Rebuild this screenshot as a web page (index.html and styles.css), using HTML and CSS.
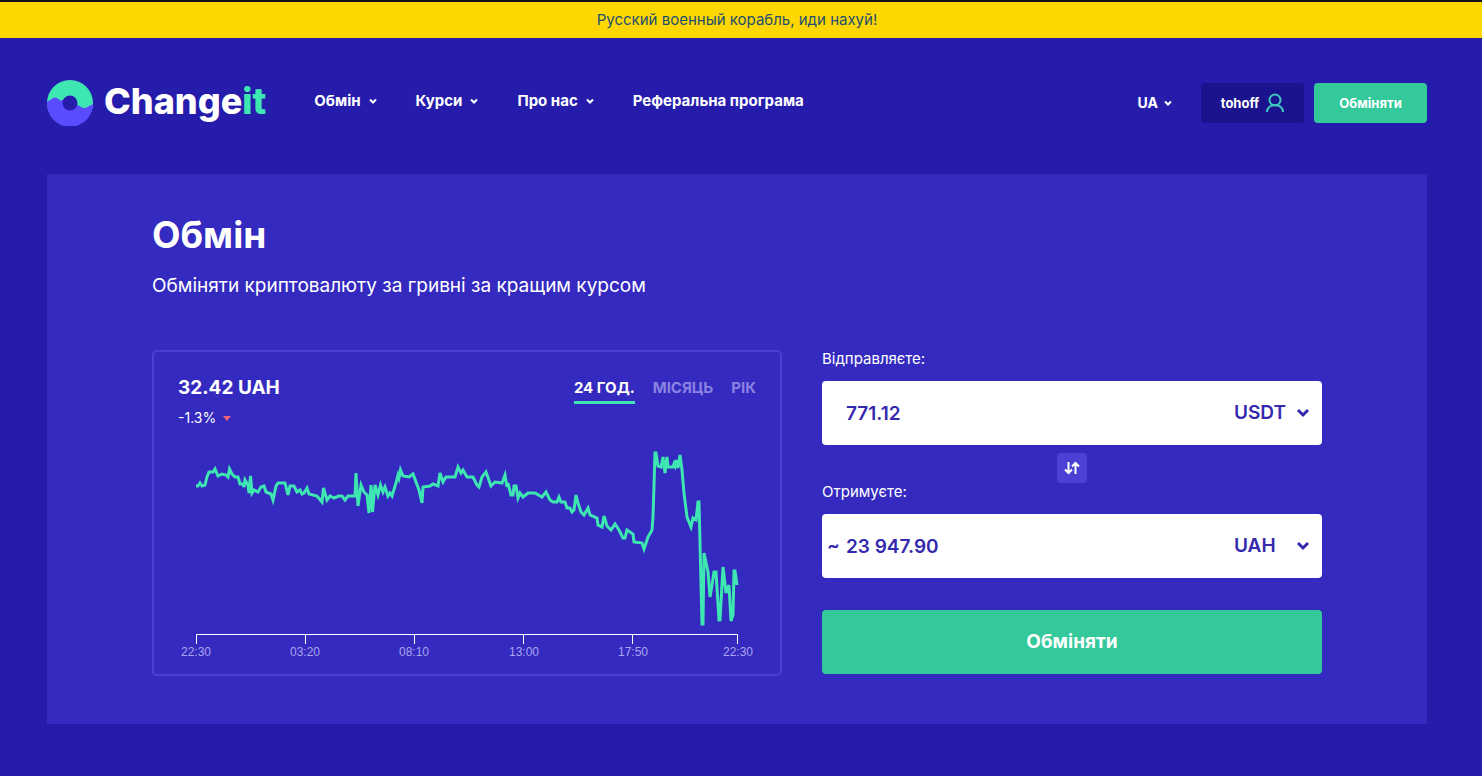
FILE: index.html
```html
<!DOCTYPE html>
<html lang="uk">
<head>
<meta charset="utf-8">
<meta name="viewport" content="width=device-width, initial-scale=1">
<title>Changeit – Обмін</title>
<link rel="stylesheet" href="styles.css">
</head>
<body>
<div class="banner" lang="ru">Русский военный корабль, иди нахуй!</div>
<div class="page">
  <header class="header">
    <a class="logo" href="#" aria-label="Changeit">
      <svg class="logo-mark" viewBox="0 0 46 46" aria-hidden="true">
        <circle cx="23" cy="23" r="23" fill="#3ee6b1"/>
        <path d="M0 23L0.100 21.500C4 20.500 5 17.500 8 17.500C11 17.500 12 20.500 14 20.500C16 20.500 17 18 19 18L30 25C33 25 34 28.500 38 28C41 27.500 43 24.500 46 24.500A23 23 0 0 1 0 23Z" fill="#594cfe"/>
        <circle cx="23" cy="23" r="7.500" fill="#251cac"/>
      </svg>
      <span class="logo-text">Change<span class="logo-accent">it</span></span>
    </a>
    <nav class="nav">
      <button class="nav-item" type="button">Обмін <svg class="chevron-small" viewBox="0 0 8 6" aria-hidden="true"><path d="M1 1.500L4 4.500L7 1.500"/></svg></button>
      <button class="nav-item" type="button">Курси <svg class="chevron-small" viewBox="0 0 8 6" aria-hidden="true"><path d="M1 1.500L4 4.500L7 1.500"/></svg></button>
      <button class="nav-item" type="button">Про нас <svg class="chevron-small" viewBox="0 0 8 6" aria-hidden="true"><path d="M1 1.500L4 4.500L7 1.500"/></svg></button>
      <a class="nav-item" href="#">Реферальна програма</a>
    </nav>
    <div class="actions">
      <button class="language" type="button">UA <svg class="chevron-small" viewBox="0 0 8 6" aria-hidden="true"><path d="M1 1.500L4 4.500L7 1.500"/></svg></button>
      <a class="button account" href="#">tohoff
        <svg class="account-icon" viewBox="0 0 18 20" aria-hidden="true"><circle cx="9" cy="7" r="5.500"/><path d="M1 19C1 9.800 17 9.800 17 19"/></svg>
      </a>
      <a class="button header-exchange" href="#">Обміняти</a>
    </div>
  </header>

  <main class="panel">
    <h1 class="title">Обмін</h1>
    <p class="subtitle">Обміняти криптовалюту за гривні за кращим курсом</p>
    <div class="columns">
      <section class="chart" aria-label="Курс">
        <div class="chart-head">
          <div class="rate">
            <strong class="rate-value">32.42 UAH</strong>
            <span class="rate-change">-1.3% <svg class="rate-arrow" viewBox="0 0 8 5" aria-hidden="true"><path d="M0 0H8L4 5Z"/></svg></span>
          </div>
          <div class="periods">
            <button class="period period-active" type="button">24 ГОД.</button>
            <button class="period" type="button">МІСЯЦЬ</button>
            <button class="period" type="button">РІК</button>
          </div>
        </div>
        <svg class="plot" viewBox="178 440 578 220" role="img" aria-label="Графік курсу за 24 години">
          <polyline class="plot-line" points="196,486 198,486 200,483 202,486 205,485 207,477 209,472 213,472 215,469 218,476 222,474 226,475 228,477 229.500,469 232,474 235,477 238,477 240,484 243,484 244,487 245,480 248,485 249,493 250.500,476 252,493 254,490 258,492 261,487 264,486 266,492 271,494 273,500 276,486 278,483 285,483 288,495 290,486 294,486 297,492 300,490 302,494 304,493 307,488 309,494 317,496 322,502 323.500,488 327,500 330,496 334,498 339,496 342,496 345,500 348,496 355,496 356,473 358,506 361,485 364,492 367,495 369,513 371,485 372.500,512 375,485 378,495 380.500,485 383,492 385,487 388,496 390,493 392,496 396,483 398,475 399,478 400.500,470 403,476 409,477 413,474 416,482 419,490 422,503 423,487 430,486 433,484 438,486 440,473 443,482 446,477 455,477 458,467 461,473 463,470 467,477 473,477 477,485 479,487 482,477 486,472 491,486 495,482 502,483 505,475 507,487 508,483 511,495 513,495 514,486 516,486 518,498 520,493 523,497 528,493 535,493 542,497 546,492 550,500 553,502 557,502 559,497 561,502 565,502 567,508 570,508 572,512 574,510 576,495 578,503 581,512 584,515 588,508 590,515 597,518 598,525 602,527 604,516 607,526 611,530 615,524 619,530 623,538 625,538 627,530 633,534 634,542 642,543 644,549 648,537 652,530 653,517 655,453 656,453 658,466 661,467 663,457 665,473 667,457 668,467 673,467 674,464 675,466 676,460 678,468 680,455 682,470 684,493 687,517 691,527 693,518 696,520 698,502 699,502 702,624 703,624 704,553 708,572 710,597 712,585 714,572 716,572 719,620 720,620 723,567 726,593 729,585 731,621 733,615 734,571 735,571 737,585"/>
          <path class="plot-axis" d="M196.500 644V634.500H737.500V644M305.500 634.500V644M414.500 634.500V644M523.500 634.500V644M632.500 634.500V644"/>
          <g class="plot-labels">
            <text x="196" y="656">22:30</text>
            <text x="305" y="656">03:20</text>
            <text x="414" y="656">08:10</text>
            <text x="524" y="656">13:00</text>
            <text x="633" y="656">17:50</text>
            <text x="738" y="656">22:30</text>
          </g>
        </svg>
      </section>

      <form class="form">
        <label class="label" for="send">Відправляєте:</label>
        <div class="field">
          <span class="approx"></span>
          <input class="amount" id="send" type="text" value="771.12">
          <span class="currency">
            <select class="currency-select" aria-label="Валюта, яку відправляєте"><option>USDT</option></select>
            <svg class="chevron-large" viewBox="0 0 14 10" aria-hidden="true"><path d="M2 2L7 7L12 2"/></svg>
          </span>
        </div>
        <button class="swap" type="button" aria-label="Поміняти місцями">
          <svg class="swap-icon" viewBox="0 0 16 14" aria-hidden="true"><path d="M4.500 1V12M1 8.500L4.500 12L8 8.500M11.500 13V2M8 5.500L11.500 2L15 5.500"/></svg>
        </button>
        <label class="label" for="receive">Отримуєте:</label>
        <div class="field">
          <span class="approx">~</span>
          <input class="amount" id="receive" type="text" value="23 947.90">
          <span class="currency">
            <select class="currency-select" aria-label="Валюта, яку отримуєте"><option>UAH</option></select>
            <svg class="chevron-large" viewBox="0 0 14 10" aria-hidden="true"><path d="M2 2L7 7L12 2"/></svg>
          </span>
        </div>
        <button class="button submit" type="submit">Обміняти</button>
      </form>
    </div>
  </main>
</div>
</body>
</html>
```
FILE: styles.css
```css
:root {
  --page: #251cac;
  --panel: #342abf;
  --green: #33c99b;
  --mint: #3ee6b1;
  --outline: #493fd3;
  --gutter: 8px;
}

* {
  box-sizing: border-box;
}

body {
  margin: 0;
  background: var(--page);
  color: #fff;
  font-family: Inter, "Noto Sans", sans-serif;
  font-size: 16px;
  line-height: 24px;
}

button,
input,
select {
  margin: 0;
  padding: 0;
  border: 0;
  background: none;
  color: inherit;
  font: inherit;
}

button {
  cursor: pointer;
}

a {
  color: inherit;
  text-decoration: none;
}

svg {
  flex: none;
  fill: none;
}

.banner {
  padding: 6px var(--gutter) 6px 0;
  border-top: 2px solid #14141c;
  background: #ffd700;
  color: #1d4f70;
  font-size: 15px;
  text-align: center;
}

.page {
  max-width: 1474px;
  margin: 0 var(--gutter) 0 0;
  padding: 0 47px 52px;
}

.header {
  display: flex;
  align-items: center;
  padding: 42px 0 48px;
}

.logo {
  display: flex;
  align-items: center;
  gap: 11px;
}

.logo-mark {
  width: 46px;
  height: 46px;
}

.logo-text {
  padding-bottom: 4px;
  font-size: 36px;
  font-weight: 800;
  line-height: 42px;
}

.logo-accent {
  color: var(--mint);
}

.nav {
  display: flex;
  gap: 39px;
  margin-left: 48px;
  padding-bottom: 4px;
}

.nav-item,
.language {
  display: flex;
  align-items: center;
  gap: 8px;
  font-size: 15px;
  font-weight: 700;
  white-space: nowrap;
}

.chevron-small {
  width: 8px;
  height: 6px;
  stroke: #fff;
  stroke-width: 2;
}

.actions {
  display: flex;
  align-items: center;
  gap: 10px;
  margin-left: auto;
}

.language {
  gap: 6px;
  margin-right: 19px;
  font-size: 14px;
}

.button {
  display: flex;
  align-items: center;
  justify-content: center;
  border-radius: 4px;
  background: var(--green);
  font-weight: 700;
}

.account {
  gap: 7px;
  min-width: 103px;
  height: 40px;
  background: #1b128e;
  font-size: 13px;
}

.account-icon {
  width: 18px;
  height: 20px;
  stroke: #3fc8c0;
  stroke-width: 2;
}

.header-exchange {
  min-width: 113px;
  height: 40px;
  font-size: 13px;
}

.panel {
  padding: 37px 105px 48px;
  background: var(--panel);
}

.title {
  margin: 0;
  font-size: 37px;
  font-weight: 700;
  line-height: 48px;
}

.subtitle {
  margin: 15px 0 0;
  font-size: 19px;
  line-height: 24px;
}

.columns {
  display: grid;
  grid-template-columns: 63fr 50fr;
  gap: 40px;
  align-items: start;
  margin-top: 50px;
}

.chart {
  margin-top: 2px;
  padding: 24px 24px 14px;
  border: 2px solid var(--outline);
  border-radius: 5px;
}

.chart-head {
  display: flex;
  justify-content: space-between;
  align-items: flex-start;
}

.rate {
  display: flex;
  flex-direction: column;
  gap: 6px;
}

.rate-value {
  font-size: 19px;
}

.rate-change {
  display: flex;
  align-items: center;
  gap: 7px;
  font-size: 14px;
}

.rate-arrow {
  width: 8px;
  height: 5px;
  fill: #f0617b;
}

.periods {
  display: flex;
  gap: 18px;
}

.period {
  padding-bottom: 1px;
  border-bottom: 3px solid transparent;
  color: #8b82e2;
  font-size: 15px;
  font-weight: 700;
}

.period-active {
  border-color: var(--mint);
  color: #fff;
}

.plot {
  display: block;
  width: 100%;
  margin-top: 10px;
}

.plot-line {
  stroke: var(--mint);
  stroke-width: 3;
}

.plot-axis {
  stroke: #fff;
  stroke-width: 1;
}

.plot-labels {
  fill: #aba4ee;
  font-family: "Liberation Sans", Arial, sans-serif;
  font-size: 12px;
  text-anchor: middle;
}

.form {
  display: flex;
  flex-direction: column;
}

.label {
  padding-bottom: 11px;
  font-size: 15px;
  line-height: 22px;
}

.field {
  display: flex;
  align-items: center;
  height: 64px;
  border-radius: 4px;
  background: #fff;
  color: #3429ae;
  font-size: 19px;
  font-weight: 600;
}

.approx {
  width: 24px;
  padding-left: 5px;
}

.amount {
  flex: 1;
  min-width: 0;
  height: 100%;
}

.currency {
  display: grid;
  align-items: center;
  width: 88px;
}

.currency-select {
  grid-area: 1 / 1;
  width: 100%;
  appearance: none;
}

.chevron-large {
  grid-area: 1 / 1;
  justify-self: end;
  width: 14px;
  height: 10px;
  margin-right: 12px;
  stroke: #3429ae;
  stroke-width: 3;
  pointer-events: none;
}

.swap {
  display: flex;
  align-items: center;
  justify-content: center;
  align-self: center;
  width: 30px;
  height: 30px;
  margin: 8px 0 -2px;
  border-radius: 4px;
  background: #4a41d4;
}

.swap-icon {
  width: 16px;
  height: 14px;
  stroke: #fff;
  stroke-width: 2;
}

.submit {
  height: 64px;
  margin-top: 32px;
  font-size: 19px;
}

@media (max-width: 1100px) {
  .header {
    flex-wrap: wrap;
    gap: 24px;
  }

  .nav {
    flex-wrap: wrap;
    gap: 16px;
    margin-left: 0;
  }

  .panel {
    padding: 32px 24px;
  }

  .columns {
    grid-template-columns: 1fr;
  }
}
```
